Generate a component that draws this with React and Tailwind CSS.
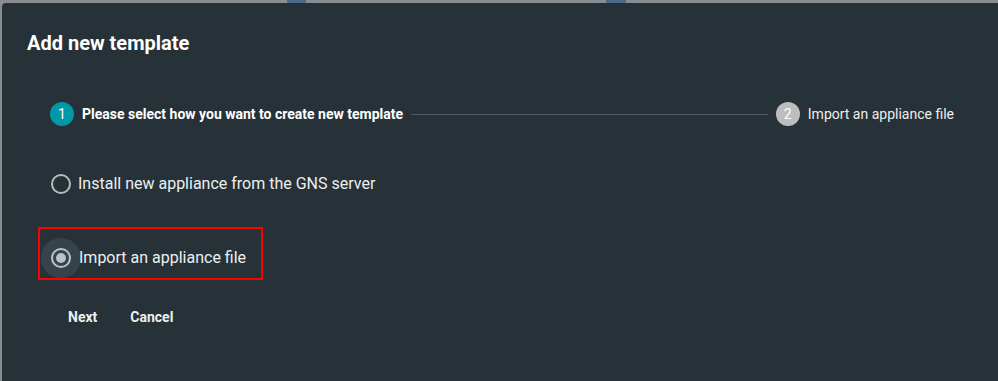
export default function App() {
  return (
    <div
      className="w-[998px] h-[381px] bg-[#8a8d90] pt-[3px] pl-[2px] relative overflow-hidden"
      style={{ fontFamily: "Roboto, 'Liberation Sans', sans-serif" }}
    >
      {/* background bits peeking above the dialog */}
      <div className="absolute top-0 left-[287px] w-[19px] h-[3px] bg-[#4a6a8c]" />
      <div className="absolute top-0 left-[606px] w-[20px] h-[3px] bg-[#4a6a8c]" />

      <div className="w-full h-full bg-[#263238] rounded-tl-[4px] pl-[25px] pt-[28px]">
        <h2 className="text-[20px] leading-[24px] font-bold text-white">Add new template</h2>

        {/* stepper */}
        <div className="flex items-center mt-[47px] pl-[23px] pr-[44px] h-[24px]">
          <div className="w-[24px] h-[24px] rounded-full bg-[#0097a7] text-white text-[14px] flex items-center justify-center">1</div>
          <span className="ml-[8px] text-[14px] font-bold text-white">Please select how you want to create new template</span>
          <div className="flex-1 h-px bg-[#4f5b62] mx-[8px]" />
          <div className="w-[24px] h-[24px] rounded-full bg-[#bdbdbd] text-white text-[14px] flex items-center justify-center">2</div>
          <span className="ml-[8px] text-[14px] text-[#eeeeee]">Import an appliance file</span>
        </div>

        {/* options */}
        <div className="flex items-center mt-[46px] pl-[24px] h-[24px]">
          <div className="w-[20px] h-[20px] rounded-full border-2 border-[#b8bcbf]" />
          <span className="ml-[7px] text-[16px] text-[#eceff1]">Install new appliance from the GNS server</span>
        </div>

        <div className="mt-[31px] ml-[11px] w-[225px] h-[53px] border-2 border-[#ff0000] flex items-start pt-[9px]">
          <div className="w-[40px] h-[40px] ml-[1px] rounded-full bg-[#37434a] flex items-center justify-center">
            <div className="w-[20px] h-[20px] rounded-full border-2 border-[#b8c2c8] flex items-center justify-center">
              <div className="w-[10px] h-[10px] rounded-full bg-[#b8c2c8]" />
            </div>
          </div>
          <span className="-ml-[2px] text-[16px] leading-[40px] text-[#eceff1]">Import an appliance file</span>
        </div>

        <div className="flex items-center mt-[25px] pl-[41px] gap-[33px] h-[24px]">
          <span className="text-[14px] font-bold text-[#eceff1]">Next</span>
          <span className="text-[14px] font-bold text-[#eceff1]">Cancel</span>
        </div>
      </div>
    </div>
  );
}
